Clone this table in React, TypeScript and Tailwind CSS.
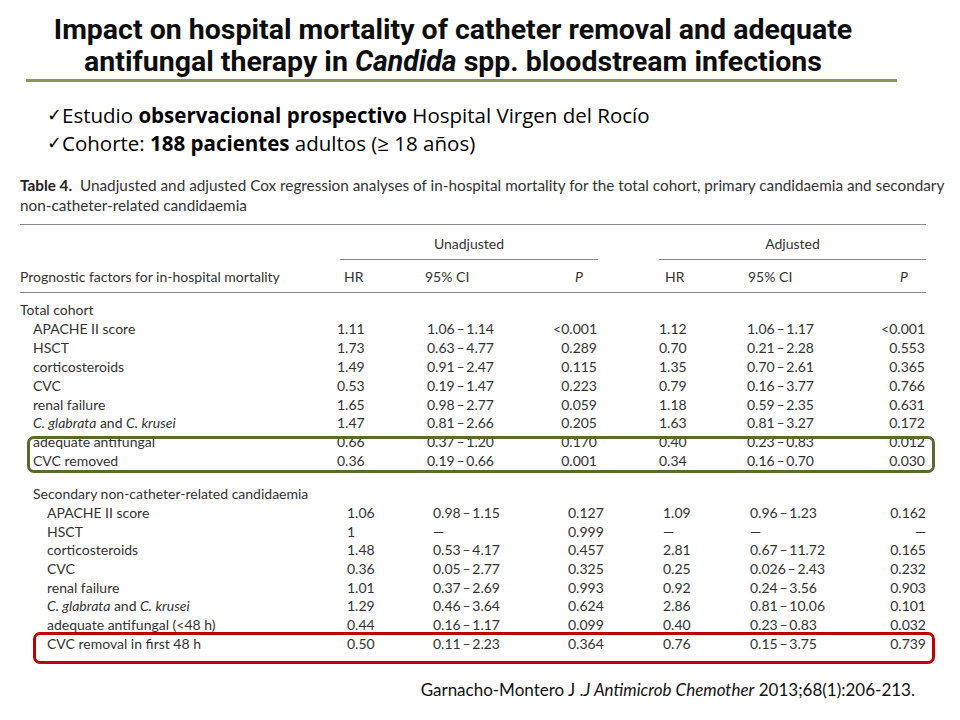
import React from "react";

type Row = { l: React.ReactNode; v: string[] };

const total: Row[] = [
  { l: "APACHE II score", v: ["1.11", "1.06\u2009\u2013\u20091.14", "<0.001", "1.12", "1.06\u2009\u2013\u20091.17", "<0.001"] },
  { l: "HSCT", v: ["1.73", "0.63\u2009\u2013\u20094.77", "0.289", "0.70", "0.21\u2009\u2013\u20092.28", "0.553"] },
  { l: "corticosteroids", v: ["1.49", "0.91\u2009\u2013\u20092.47", "0.115", "1.35", "0.70\u2009\u2013\u20092.61", "0.365"] },
  { l: "CVC", v: ["0.53", "0.19\u2009\u2013\u20091.47", "0.223", "0.79", "0.16\u2009\u2013\u20093.77", "0.766"] },
  { l: "renal failure", v: ["1.65", "0.98\u2009\u2013\u20092.77", "0.059", "1.18", "0.59\u2009\u2013\u20092.35", "0.631"] },
  { l: <><i>C. glabrata</i> and <i>C. krusei</i></>, v: ["1.47", "0.81\u2009\u2013\u20092.66", "0.205", "1.63", "0.81\u2009\u2013\u20093.27", "0.172"] },
  { l: "adequate antifungal", v: ["0.66", "0.37\u2009\u2013\u20091.20", "0.170", "0.40", "0.23\u2009\u2013\u20090.83", "0.012"] },
  { l: "CVC removed", v: ["0.36", "0.19\u2009\u2013\u20090.66", "0.001", "0.34", "0.16\u2009\u2013\u20090.70", "0.030"] },
];

const secondary: Row[] = [
  { l: "APACHE II score", v: ["1.06", "0.98\u2009\u2013\u20091.15", "0.127", "1.09", "0.96\u2009\u2013\u20091.23", "0.162"] },
  { l: "HSCT", v: ["1", "\u2014", "0.999", "\u2014", "\u2014", "\u2014"] },
  { l: "corticosteroids", v: ["1.48", "0.53\u2009\u2013\u20094.17", "0.457", "2.81", "0.67\u2009\u2013\u200911.72", "0.165"] },
  { l: "CVC", v: ["0.36", "0.05\u2009\u2013\u20092.77", "0.325", "0.25", "0.026\u2009\u2013\u20092.43", "0.232"] },
  { l: "renal failure", v: ["1.01", "0.37\u2009\u2013\u20092.69", "0.993", "0.92", "0.24\u2009\u2013\u20093.56", "0.903"] },
  { l: <><i>C. glabrata</i> and <i>C. krusei</i></>, v: ["1.29", "0.46\u2009\u2013\u20093.64", "0.624", "2.86", "0.81\u2009\u2013\u200910.06", "0.101"] },
  { l: "adequate antifungal (<48 h)", v: ["0.44", "0.16\u2009\u2013\u20091.17", "0.099", "0.40", "0.23\u2009\u2013\u20090.83", "0.032"] },
  { l: "CVC removal in first 48 h", v: ["0.50", "0.11\u2009\u2013\u20092.23", "0.364", "0.76", "0.15\u2009\u2013\u20093.75", "0.739"] },
];

const tableFont = { fontFamily: "Lato, 'Open Sans', sans-serif" };

export default function App() {
  return (
    <div className="relative w-[960px] h-[720px] bg-white overflow-hidden text-[#111]">
      {/* Title */}
      <div
        className="pt-[14px] w-[906px] text-center font-bold text-[28.5px] leading-[32px] text-[#0d0d0d]"
        style={{ fontFamily: "Roboto, 'DejaVu Sans', sans-serif" }}
      >
        <div>Impact on hospital mortality of catheter removal and adequate</div>
        <div>
          antifungal therapy in <i>Candida</i> spp. bloodstream infections
        </div>
      </div>
      <div className="ml-[26px] mt-[1px] w-[871px] h-[3px] bg-[#8a9a50]" />

      {/* Bullets */}
      <div
        className="mt-[19px] pl-[47px] text-[20.5px] leading-[28px] text-black"
        style={{ fontFamily: "'Open Sans', Lato, sans-serif" }}
      >
        <div className="flex items-center">
          <span className="w-[15px] text-[18px]" style={{ fontFamily: "'DejaVu Sans', sans-serif" }}>✓</span>
          <span>
            Estudio <b>observacional prospectivo</b> Hospital Virgen del Rocío
          </span>
        </div>
        <div className="flex items-center">
          <span className="w-[15px] text-[18px]" style={{ fontFamily: "'DejaVu Sans', sans-serif" }}>✓</span>
          <span>
            Cohorte: <b>188 pacientes</b> adultos (≥ 18 años)
          </span>
        </div>
      </div>

      {/* Caption */}
      <div
        className="mt-[18px] pl-[20px] text-[15.3px] leading-[20px] text-[#333] whitespace-nowrap"
        style={tableFont}
      >
        <div>
          <b className="text-[#222]">Table 4.</b>&nbsp; Unadjusted and adjusted Cox regression analyses of in-hospital mortality for the total cohort, primary candidaemia and secondary
        </div>
        <div>non-catheter-related candidaemia</div>
      </div>

      {/* Table */}
      <div className="ml-[20px] w-[906px] mt-[9px] text-[14px] text-[#333]" style={tableFont}>
        <div className="h-px bg-[#888]" />
        <div className="flex pt-[9px] leading-[20px]">
          <div className="w-[320px]" />
          <div className="w-[258px] flex flex-col">
            <div className="text-center">Unadjusted</div>
            <div className="mt-[5px] h-px bg-[#888]" />
          </div>
          <div className="w-[61px]" />
          <div className="w-[267px] flex flex-col">
            <div className="text-center">Adjusted</div>
            <div className="mt-[5px] h-px bg-[#888]" />
          </div>
        </div>
        <div className="flex mt-[7px] leading-[20px] whitespace-nowrap">
          <div className="w-[324px]">Prognostic factors for in-hospital mortality</div>
          <div className="w-[81px]">HR</div>
          <div className="w-[150px]">95% CI</div>
          <div className="w-[90px]"><i>P</i></div>
          <div className="w-[83px]">HR</div>
          <div className="w-[152px]">95% CI</div>
          <div className="w-[26px]"><i>P</i></div>
        </div>
        <div className="mt-[5px] h-px bg-[#888]" />

        <div className="mt-[8px] leading-[18.9px]">
          <div>Total cohort</div>
          {total.map((r, i) => (
            <div key={i} className="flex whitespace-nowrap">
              <div className="w-[317px] pl-[13px]">{r.l}</div>
              <div className="w-[90px]">{r.v[0]}</div>
              <div className="w-[120px]">{r.v[1]}</div>
              <div className="w-[50px] text-right">{r.v[2]}</div>
              <div className="w-[62px]" />
              <div className="w-[88px]">{r.v[3]}</div>
              <div className="w-[128px]">{r.v[4]}</div>
              <div className="w-[50px] text-right">{r.v[5]}</div>
            </div>
          ))}
        </div>

        <div className="mt-[14px] leading-[18.7px]">
          <div className="pl-[13px]">Secondary non-catheter-related candidaemia</div>
          {secondary.map((r, i) => (
            <div key={i} className="flex whitespace-nowrap">
              <div className="w-[327px] pl-[27px]">{r.l}</div>
              <div className="w-[86px]">{r.v[0]}</div>
              <div className="w-[135px]">{r.v[1]}</div>
              <div className="w-[95px]">{r.v[2]}</div>
              <div className="w-[87px]">{r.v[3]}</div>
              <div className="w-[126px]">{r.v[4]}</div>
              <div className="w-[50px] text-right">{r.v[5]}</div>
            </div>
          ))}
        </div>
      </div>

      {/* Footer */}
      <div
        className="mt-[27px] pr-[45px] text-right text-[17px] leading-[20px] text-[#111]"
        style={{ fontFamily: "Lato, 'Open Sans', sans-serif" }}
      >
        Garnacho-Montero J .<i>J Antimicrob Chemother</i> 2013;68(1):206-213.
      </div>

      {/* Highlight boxes */}
      <div className="absolute left-[27px] top-[436px] w-[908px] h-[37px] border-[3px] border-[#5b6b2f] rounded-[7px]" />
      <div className="absolute left-[33px] top-[632px] w-[902px] h-[32px] border-[3px] border-[#c00000] rounded-[7px]" />
    </div>
  );
}
